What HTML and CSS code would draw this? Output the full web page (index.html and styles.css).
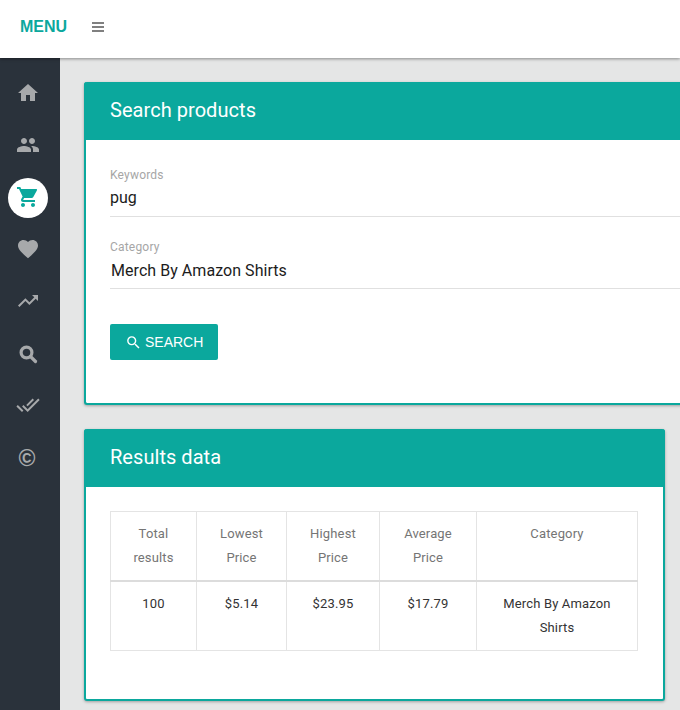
FILE: index.html
```html
<!DOCTYPE html>
<html lang="en">
<head>
<meta charset="utf-8">
<title>Search products</title>
<link rel="stylesheet" href="styles.css">
</head>
<body>
<header class="topbar">
  <span class="brand">MENU</span>
  <svg class="burger" viewBox="0 0 12 10" width="12" height="10"><path d="M0 0h12v2H0zM0 4h12v2H0zM0 8h12v2H0z"/></svg>
</header>
<div class="shell">
  <nav class="side">
    <a class="nav"><svg viewBox="0 0 24 24" width="24" height="24"><path d="M10 20v-6h4v6h5v-8h3L12 3 2 12h3v8z"/></svg></a>
    <a class="nav"><svg viewBox="0 0 24 24" width="24" height="24"><path d="M16 11c1.660 0 2.990-1.340 2.990-3S17.660 5 16 5s-3 1.340-3 3 1.340 3 3 3zm-8 0c1.660 0 2.990-1.340 2.990-3S9.660 5 8 5 5 6.340 5 8s1.340 3 3 3zm0 2c-2.330 0-7 1.170-7 3.500V19h14v-2.500c0-2.330-4.670-3.500-7-3.500zm8 0c-.290 0-.620.020-.970.050 1.160.840 1.970 1.970 1.970 3.450V19h6v-2.500c0-2.330-4.670-3.500-7-3.500z"/></svg></a>
    <a class="nav active"><svg viewBox="0 0 24 24" width="24" height="24"><path d="M7 18c-1.100 0-1.990.9-1.990 2S5.900 22 7 22s2-.9 2-2-.9-2-2-2zM1 2v2h2l3.600 7.590-1.350 2.450c-.16.280-.25.610-.25.960 0 1.100.9 2 2 2h12v-2H7.420c-.14 0-.25-.110-.25-.250l.03-.120.900-1.630h7.450c.750 0 1.410-.410 1.750-1.030l3.580-6.490A1 1 0 0 0 20 4H5.210l-.94-2H1zm16 16c-1.100 0-1.990.9-1.990 2s.890 2 1.990 2 2-.9 2-2-.9-2-2-2z"/></svg></a>
    <a class="nav"><svg viewBox="0 0 24 24" width="24" height="24"><path d="M12 21.350l-1.450-1.320C5.400 15.360 2 12.280 2 8.500 2 5.420 4.420 3 7.500 3c1.740 0 3.410.810 4.500 2.090C13.090 3.810 14.760 3 16.500 3 19.580 3 22 5.420 22 8.500c0 3.780-3.400 6.860-8.550 11.540L12 21.350z"/></svg></a>
    <a class="nav"><svg viewBox="0 0 24 24" width="24" height="24"><path d="M16 6l2.290 2.290-4.880 4.880-4-4L2 16.590 3.410 18l6-6 4 4 6.300-6.290L22 12V6z"/></svg></a>
    <a class="nav"><svg class="loupe" viewBox="0 0 24 24" width="24" height="24"><circle cx="10.500" cy="11.500" r="5.400"/><path d="M14.500 15.500l5 5"/></svg></a>
    <a class="nav"><svg viewBox="0 0 24 24" width="24" height="24"><path d="M18 7l-1.410-1.410-6.340 6.340 1.410 1.410L18 7zm4.240-1.410L11.660 16.170 7.480 12l-1.410 1.410L11.660 19l12-12-1.420-1.410zM.41 13.410L6 19l1.410-1.410L1.830 12 .41 13.410z"/></svg></a>
    <a class="nav nav-text">©</a>
  </nav>
  <main class="content">
    <section class="card card-wide">
      <h2 class="card-head">Search products</h2>
      <div class="card-body search-body">
        <div class="field">
          <label class="label">Keywords</label>
          <div class="value">pug</div>
        </div>
        <div class="field">
          <label class="label">Category</label>
          <div class="value value-select">Merch By Amazon Shirts</div>
        </div>
        <button class="btn" type="button">
          <svg viewBox="0 0 24 24" width="17" height="17"><path d="M15.500 14h-.790l-.280-.270A6.470 6.470 0 0 0 16 9.500 6.500 6.500 0 1 0 9.500 16c1.610 0 3.090-.590 4.230-1.570l.270.280v.790l5 4.990L20.490 19l-4.990-5zm-6 0C7.010 14 5 11.990 5 9.500S7.010 5 9.500 5 14 7.010 14 9.500 11.990 14 9.500 14z"/></svg>
          SEARCH
        </button>
      </div>
    </section>
    <section class="card card-results">
      <h2 class="card-head">Results data</h2>
      <div class="card-body results-body">
        <table class="table">
          <colgroup>
            <col class="c1"><col class="c2"><col class="c3"><col class="c4"><col class="c5">
          </colgroup>
          <thead>
            <tr><th>Total results</th><th>Lowest Price</th><th>Highest Price</th><th>Average Price</th><th>Category</th></tr>
          </thead>
          <tbody>
            <tr><td>100</td><td>$5.14</td><td>$23.95</td><td>$17.79</td><td>Merch By Amazon Shirts</td></tr>
          </tbody>
        </table>
      </div>
    </section>
  </main>
</div>
</body>
</html>
```
FILE: styles.css
```css
* { box-sizing: border-box; }
html, body { margin: 0; height: 710px; overflow: hidden; }
body { font-family: Roboto, "Liberation Sans", sans-serif; background: #e5e6e6; color: #222; }

.topbar {
  position: relative;
  z-index: 2;
  height: 58px;
  background: #fff;
  display: flex;
  align-items: center;
  gap: 25px;
  padding: 0 0 5px 20px;
  box-shadow: 0 1px 3px rgba(0,0,0,.4);
}
.brand { font-family: "Liberation Sans", sans-serif; font-size: 16px; font-weight: 700; color: #0ba89d; }
.burger { fill: #808080; }

.shell { display: flex; height: 652px; }
.side {
  width: 60px;
  flex: none;
  background: #2a323b;
  display: flex;
  flex-direction: column;
  align-items: center;
  padding-top: 9px;
  padding-right: 4px;
}
.nav { width: 40px; height: 52px; display: flex; align-items: center; justify-content: center; flex: none; }
.nav svg { fill: #a7a9ab; }
.nav svg.loupe { fill: none; stroke: #a7a9ab; stroke-width: 3.200; stroke-linecap: round; }
.nav-text { font: 700 23px "Liberation Sans", sans-serif; color: #a7a9ab; padding: 2px 2px 0 0; }
.nav.active { position: relative; }
.nav.active::before {
  content: "";
  position: absolute;
  left: 0; top: 7px;
  width: 40px; height: 40px;
  border-radius: 50%;
  background: #fff;
}
.nav.active svg { position: relative; fill: #0ba89d; }

.content { flex: 1; min-width: 0; padding: 24px 15px 0 24px; overflow: hidden; }
.card {
  background: #fff;
  border: 2px solid #0ba89d;
  border-top: 0;
  border-right: 0;
  border-radius: 3px;
  box-shadow: 0 1px 3px rgba(0,0,0,.3);
}
.card-wide { width: 640px; height: 323px; margin-bottom: 24px; }
.card-results { height: 272px; border-right: 2px solid #0ba89d; }
.card-head {
  margin: 0 -2px;
  height: 58px;
  padding: 0 26px;
  background: #0ba89d;
  color: #fff;
  font-size: 20px;
  font-weight: 400;
  line-height: 56px;
  letter-spacing: .05px;
  border-radius: 3px 3px 0 0;
}
.search-body { padding: 27px 0 0 24px; }
.field { margin-bottom: 22px; }
.label { display: block; font-size: 12px; line-height: 16px; letter-spacing: .2px; color: #a6a6a6; }
.value {
  font-size: 16px;
  line-height: 24px;
  height: 34px;
  padding-top: 3px;
  color: #1c1c1c;
  border-bottom: 1px solid #e0e0e0;
}
.value-select { padding-left: 1px; padding-top: 4px; letter-spacing: .05px; }
.btn {
  display: flex;
  align-items: center;
  gap: 3px;
  margin-top: 35px;
  width: 108px;
  height: 36px;
  padding: 0 0 0 15px;
  border: 0;
  border-radius: 2px;
  background: #0ba89d;
  color: #fff;
  font: 400 14px "Liberation Sans", sans-serif;
}
.btn svg { fill: #fff; }
.results-body { padding: 24px 0 0 24px; }
.table {
  table-layout: fixed;
  width: 528px;
  border-collapse: collapse;
  font-size: 13px;
  letter-spacing: .15px;
  line-height: 24px;
  text-align: center;
}
.c1 { width: 86px; } .c2 { width: 90px; } .c3 { width: 93px; } .c4 { width: 97px; } .c5 { width: 161px; }
th, td { border: 1px solid #e4e4e4; padding: 10px 20px 9px; vertical-align: top; }
th { height: 69px; font-weight: 400; color: #757575; border-bottom: 2px solid #dcdcdc; }
td { height: 70px; color: #333; }
```
